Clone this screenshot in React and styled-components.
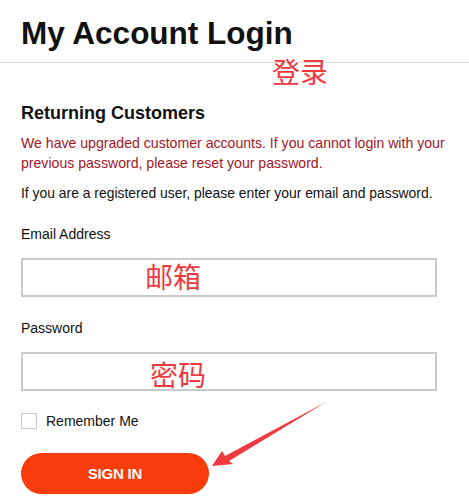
import React from "react";
import styled, { createGlobalStyle } from "styled-components";

const GlobalStyle = createGlobalStyle`
  html, body {
    margin: 0;
    padding: 0;
    background: #fff;
  }
  body {
    font-family: "Liberation Sans", Arial, sans-serif;
    color: #111;
    overflow: hidden;
  }
`;

const Page = styled.div`
  position: relative;
  width: 469px;
  height: 502px;
  overflow: hidden;
`;

const Header = styled.header`
  padding: 15px 0 0 21px;
`;

const Title = styled.h1`
  margin: 0;
  font-size: 31.5px;
  line-height: 36px;
  font-weight: 700;
  color: #111;
`;

const Divider = styled.hr`
  margin: 11px 0 0;
  border: 0;
  border-top: 1px solid #dcdcdc;
`;

const Form = styled.form`
  display: flex;
  flex-direction: column;
  padding: 39px 0 0 21px;
`;

const SectionTitle = styled.h2`
  margin: 0;
  font-size: 18px;
  line-height: 22px;
  font-weight: 700;
`;

const Notice = styled.p`
  margin: ${(p) => (p.$warn ? 9 : 10)}px 0 0;
  font-size: ${(p) => (p.$warn ? 14.1 : 13.9)}px;
  line-height: 20px;
  color: ${(p) => (p.$warn ? "#a3161f" : "#111")};
  width: 440px;
`;

const Label = styled.label`
  display: block;
  margin-top: ${(p) => p.$top || 23}px;
  font-size: 14px;
  line-height: 16px;
`;

const Input = styled.input`
  box-sizing: border-box;
  display: block;
  width: 416px;
  height: 39px;
  margin-top: 16px;
  border: 2px solid #cacaca;
  background: #fff;
  outline: none;
`;

const CheckRow = styled.label`
  display: flex;
  align-items: center;
  gap: 9px;
  margin-top: 22px;
  font-size: 14px;
  color: #111;
`;

const Box = styled.span`
  box-sizing: border-box;
  width: 16px;
  height: 16px;
  border: 1px solid #c9c9c9;
  background: #fff;
`;

const SignIn = styled.button`
  margin-top: 24px;
  width: 188px;
  height: 41px;
  border: 0;
  border-radius: 21px;
  background: #f93c0b;
  color: #fff;
  font-family: "Liberation Sans", Arial, sans-serif;
  font-size: 15px;
  font-weight: 700;
  letter-spacing: -0.2px;
  cursor: pointer;
`;

const Note = styled.span`
  position: absolute;
  left: ${(p) => p.$x}px;
  top: ${(p) => p.$y}px;
  font-family: "Noto Sans CJK SC", sans-serif;
  font-size: ${(p) => p.$size || 28}px;
  line-height: 1;
  color: #ef3a40;
  pointer-events: none;
`;

const Arrow = styled.svg`
  position: absolute;
  left: 0;
  top: 0;
  pointer-events: none;
`;

export default function App() {
  return (
    <Page>
      <GlobalStyle />
      <Header>
        <Title>My Account Login</Title>
      </Header>
      <Divider />
      <Form onSubmit={(e) => e.preventDefault()}>
        <SectionTitle>Returning Customers</SectionTitle>
        <Notice $warn>
          We have upgraded customer accounts. If you cannot login with your
          previous password, please reset your password.
        </Notice>
        <Notice>
          If you are a registered user, please enter your email and password.
        </Notice>
        <Label $top={23}>Email Address</Label>
        <Input type="text" />
        <Label>Password</Label>
        <Input type="password" />
        <CheckRow>
          <Box />
          Remember Me
        </CheckRow>
        <SignIn type="submit">SIGN IN</SignIn>
      </Form>

      <Note $x={272} $y={57} $size={28}>登录</Note>
      <Note $x={145} $y={262}>邮箱</Note>
      <Note $x={150} $y={360}>密码</Note>
      <Arrow width="469" height="502" viewBox="0 0 469 502">
        <polygon
          points="212,466 222,451 225,456 326,402 229,461 233,464"
          fill="#ef3a40"
        />
      </Arrow>
    </Page>
  );
}
